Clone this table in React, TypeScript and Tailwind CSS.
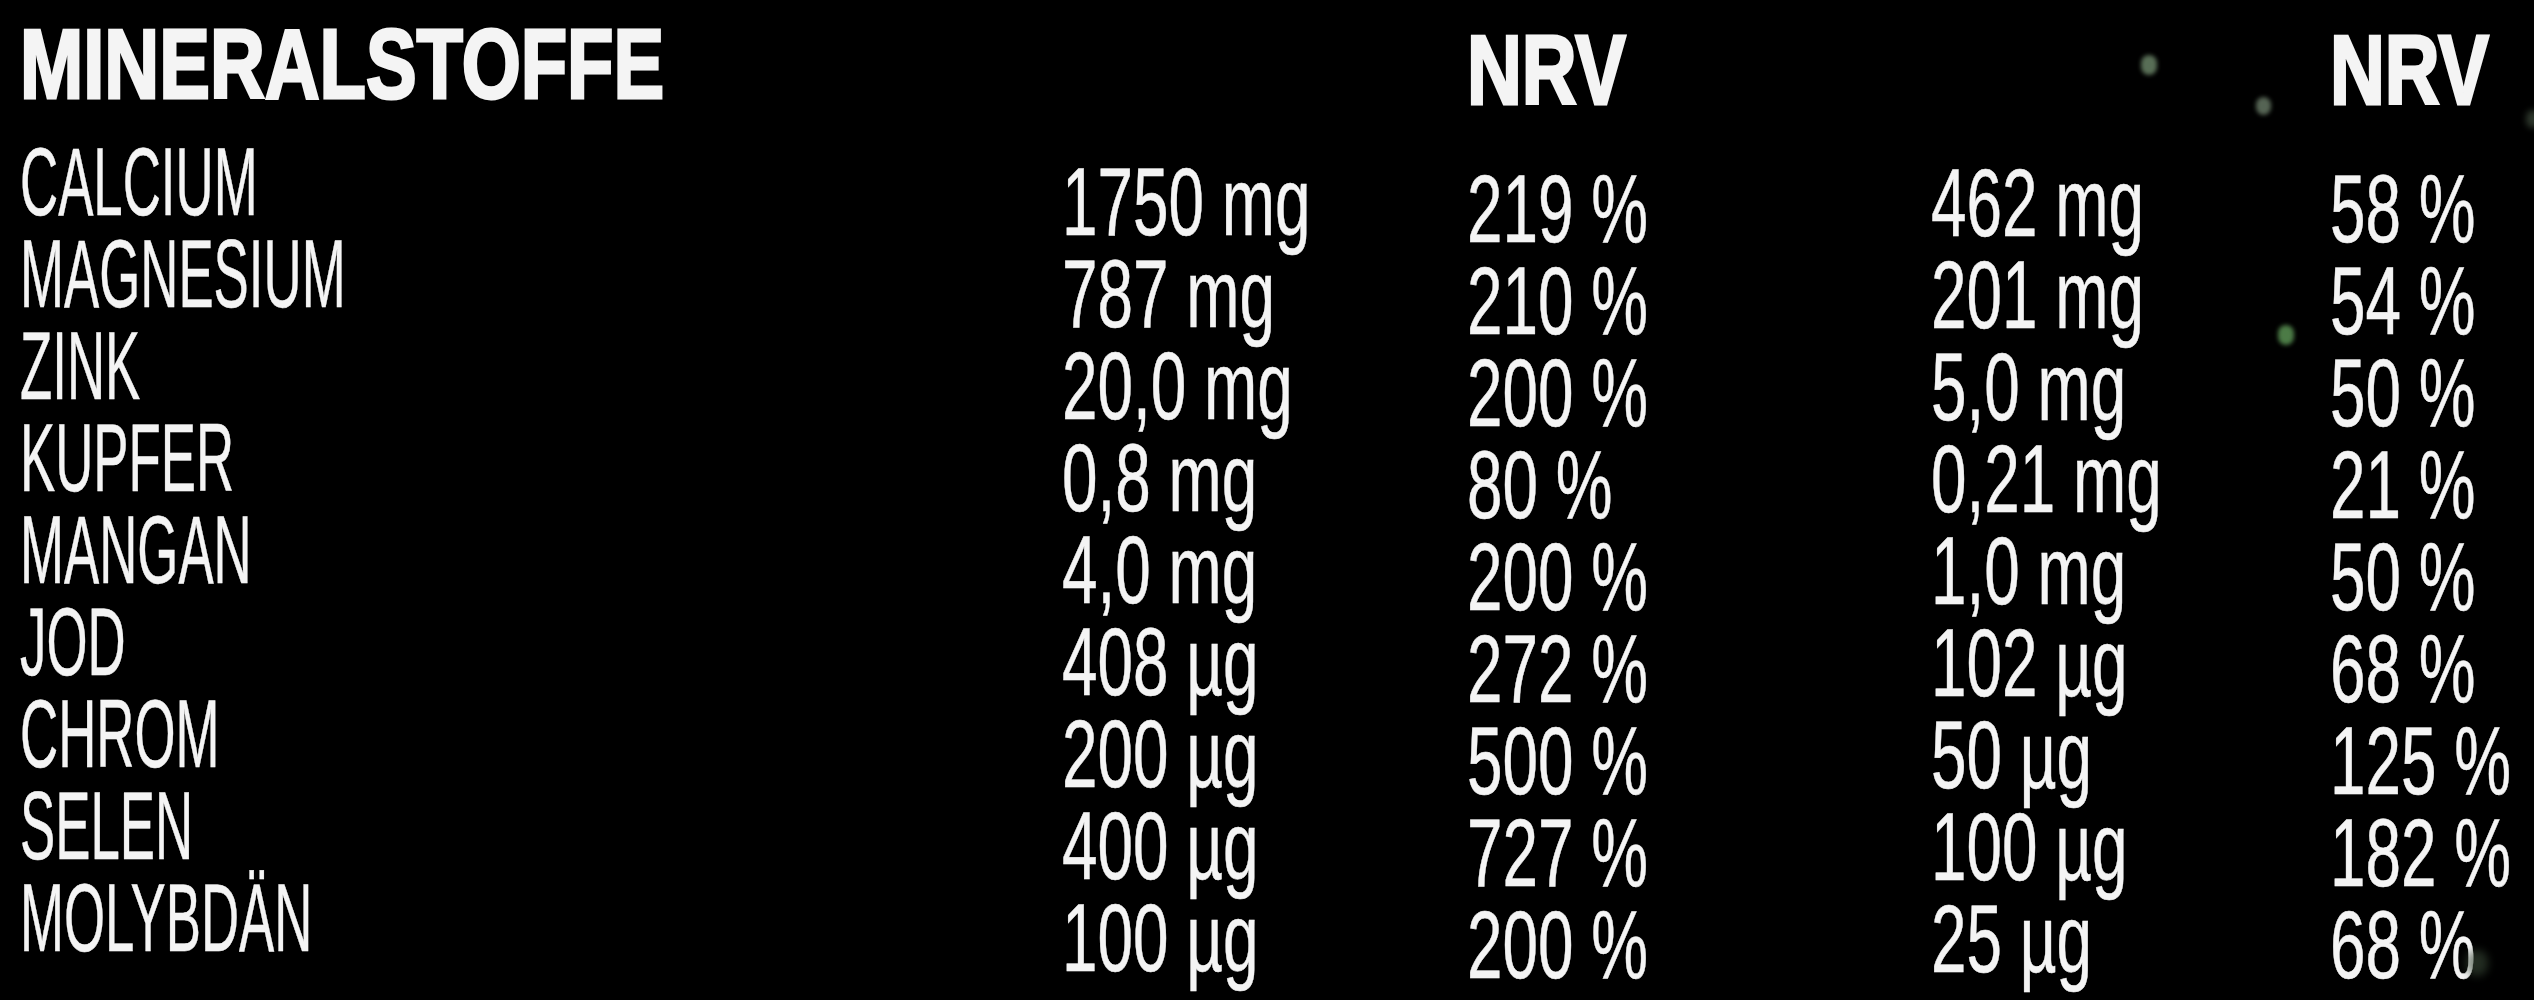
const rows = [
  { name: "CALCIUM", a: "1750 mg", ap: "219 %", b: "462 mg", bp: "58 %" },
  { name: "MAGNESIUM", a: "787 mg", ap: "210 %", b: "201 mg", bp: "54 %" },
  { name: "ZINK", a: "20,0 mg", ap: "200 %", b: "5,0 mg", bp: "50 %" },
  { name: "KUPFER", a: "0,8 mg", ap: "80 %", b: "0,21 mg", bp: "21 %" },
  { name: "MANGAN", a: "4,0 mg", ap: "200 %", b: "1,0 mg", bp: "50 %" },
  { name: "JOD", a: "408 µg", ap: "272 %", b: "102 µg", bp: "68 %" },
  { name: "CHROM", a: "200 µg", ap: "500 %", b: "50 µg", bp: "125 %" },
  { name: "SELEN", a: "400 µg", ap: "727 %", b: "100 µg", bp: "182 %" },
  { name: "MOLYBDÄN", a: "100 µg", ap: "200 %", b: "25 µg", bp: "68 %" },
];

function Heading({ children }: { children: string }) {
  return (
    <div className="h-[98px] whitespace-nowrap text-[98px] font-bold leading-[98px] [-webkit-text-stroke:3px_#f4f4f4]">
      <span className="inline-block origin-left scale-x-[0.775]">{children}</span>
    </div>
  );
}

function Cell({ children, narrow }: { children: string; narrow?: boolean }) {
  return (
    <div className="h-[92px] whitespace-nowrap text-[96px] leading-[92px] [-webkit-text-stroke:0.5px_#f4f4f4]">
      <span
        className={
          narrow
            ? "inline-block origin-left scale-x-[0.55]"
            : "inline-block origin-left scale-x-[0.665]"
        }
      >
        {children}
      </span>
    </div>
  );
}

export default function App() {
  return (
    <div className="relative h-[1000px] w-[2534px] overflow-hidden bg-black text-[#f4f4f4] [font-family:'Liberation_Sans',Arial,sans-serif]">
      <div className="flex pl-[20px]">
        {/* name column */}
        <div className="w-[1042px] shrink-0 pt-[15px]">
          <Heading>MINERALSTOFFE</Heading>
          <div className="mt-[23px]">
            {rows.map((r) => (
              <Cell key={r.name} narrow>
                {r.name}
              </Cell>
            ))}
          </div>
        </div>

        <div className="w-[405px] shrink-0 pt-[156px]">
          {rows.map((r) => (
            <Cell key={r.name}>{r.a}</Cell>
          ))}
        </div>

        <div className="w-[464px] shrink-0 pt-[21px]">
          <Heading>NRV</Heading>
          <div className="mt-[44px]">
            {rows.map((r) => (
              <Cell key={r.name}>{r.ap}</Cell>
            ))}
          </div>
        </div>

        <div className="w-[399px] shrink-0 pt-[157px]">
          {rows.map((r) => (
            <Cell key={r.name}>{r.b}</Cell>
          ))}
        </div>

        <div className="min-w-0 flex-1 pt-[21px]">
          <Heading>NRV</Heading>
          <div className="mt-[44px]">
            {rows.map((r) => (
              <Cell key={r.name}>{r.bp}</Cell>
            ))}
          </div>
        </div>
      </div>

      {/* faint green specks in the background */}
      <span className="absolute left-[2141px] top-[55px] h-[20px] w-[16px] rounded-full bg-[#6f8a6c] opacity-80 blur-[2px]" />
      <span className="absolute left-[2256px] top-[97px] h-[18px] w-[15px] rounded-full bg-[#7a8f78] opacity-70 blur-[2px]" />
      <span className="absolute left-[2278px] top-[325px] h-[20px] w-[16px] rounded-full bg-[#5f9a58] opacity-80 blur-[2px]" />
      <span className="absolute left-[2466px] top-[950px] h-[26px] w-[22px] rounded-full bg-[#3a4a38] opacity-60 blur-[4px]" />
      <span className="absolute left-[2526px] top-[110px] h-[18px] w-[14px] rounded-full bg-[#4a5a48] opacity-60 blur-[3px]" />
    </div>
  );
}
